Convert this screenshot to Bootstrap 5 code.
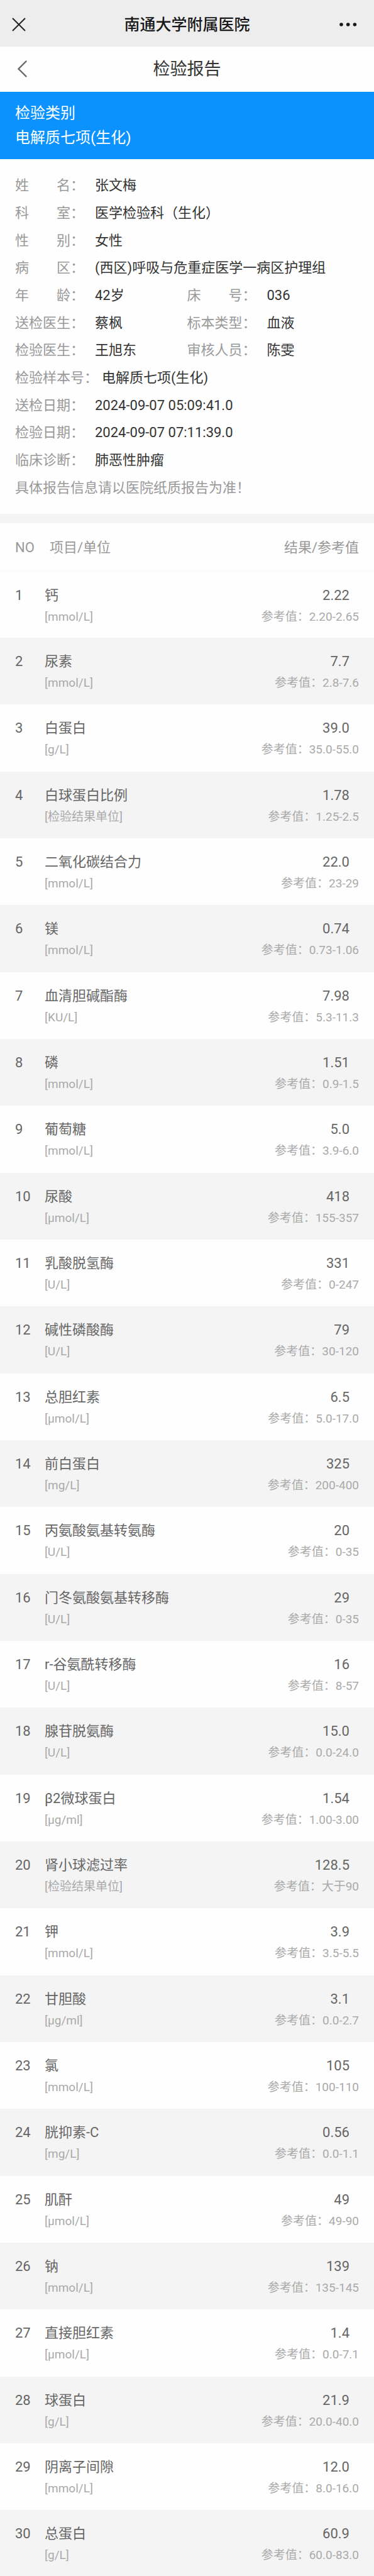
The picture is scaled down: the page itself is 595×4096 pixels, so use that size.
<!DOCTYPE html>
<html lang="zh-CN">
<head>
<meta charset="utf-8">
<meta name="viewport" content="width=device-width, initial-scale=1">
<title>检验报告</title>
<link href="https://cdn.jsdelivr.net/npm/bootstrap@5.3.0/dist/css/bootstrap.min.css" rel="stylesheet">
<style>
  body { font-family: Roboto, "Noto Sans CJK SC", sans-serif; font-size: 22px; color: #333; background: #fefefe; }
  .app-bar { height: 74px; padding: 6px 16px 0; background: #ededed; color: #181818; }
  .app-bar h1 { font-size: 25px; font-weight: 500; line-height: 36px; }
  .page-bar { height: 72px; padding: 0 20px; }
  .page-bar h2 { font-size: 27px; font-weight: 400; line-height: 36px; }
  .bar-btn { width: 40px; height: 28px; flex: none; }
  .bar-btn svg { display: block; }
  .category { padding: 15px 24px 14px; background: #0b92ff; font-size: 24px; line-height: 39px; }
  .info { padding: 20px 24px; }
  .info-row { line-height: 44px; }
  .info-row:nth-child(3n) { line-height: 43px; }
  .info dt, .info-note { font-weight: 400; color: #999; }
  .info dt { min-width: 121px; margin-right: 6px; white-space: nowrap; }
  .divider { height: 15px; background: #f4f4f4; }
  .results th { height: 76px; padding: 2px 0 0; font-weight: 400; color: #999; border-bottom: 1px solid #f8f8f8; vertical-align: middle; }
  .results td { height: 106px; padding: 21px 0 0; line-height: 34px; color: #666; vertical-align: top; }
  .results tr:nth-child(3n) td { height: 107px; }
  .results tr:last-child td { height: 105px; }
  .results tbody tr:nth-child(even) { background: #f4f4f4; }
  .results .col-no { width: 71px; padding-left: 24px; }
  .results .col-res { padding-right: 24px; text-align: right; }
  .results th.col-item { padding-left: 8px; }
  .results td span { display: block; font-size: 19px; color: #aaa; }
  .results td b { display: block; font-weight: 400; padding-right: 15px; }
</style>
</head>
<body>
<header class="app-bar d-flex align-items-center justify-content-between">
  <button type="button" class="bar-btn btn p-0 border-0" aria-label="关闭">
    <svg width="40" height="28" viewBox="0 0 40 28" fill="none" stroke="#222" stroke-width="2"><path d="M4 3 24 23M24 3 4 23"/></svg>
  </button>
  <h1 class="m-0">南通大学附属医院</h1>
  <button type="button" class="bar-btn btn p-0 border-0" aria-label="更多">
    <svg width="40" height="28" viewBox="0 0 40 28" fill="#181818"><circle cx="4" cy="13" r="2.8"/><circle cx="14.700" cy="13" r="2.8"/><circle cx="25.400" cy="13" r="2.8"/></svg>
  </button>
</header>
<nav class="page-bar d-flex align-items-center justify-content-between">
  <button type="button" class="bar-btn btn p-0 border-0" aria-label="返回">
    <svg width="40" height="28" viewBox="0 0 40 28" fill="none" stroke="#666" stroke-width="2.4" stroke-linecap="round"><path d="M21.500 1.500 9.500 13.500 21.500 25.500"/></svg>
  </button>
  <h2 class="m-0">检验报告</h2>
  <span class="bar-btn"></span>
</nav>
<section class="category text-white">
  <div>检验类别</div>
  <div>电解质七项(生化)</div>
</section>
<section class="info">
  <dl class="m-0">
    <div class="info-row d-flex"><dt>姓　　名：</dt><dd class="m-0">张文梅</dd></div>
    <div class="info-row d-flex"><dt>科　　室：</dt><dd class="m-0">医学检验科（生化）</dd></div>
    <div class="info-row d-flex"><dt>性　　别：</dt><dd class="m-0">女性</dd></div>
    <div class="info-row d-flex"><dt>病　　区：</dt><dd class="m-0">(西区)呼吸与危重症医学一病区护理组</dd></div>
    <div class="info-row row g-0">
      <div class="col-6 d-flex"><dt>年　　龄：</dt><dd class="m-0">42岁</dd></div>
      <div class="col-6 d-flex"><dt>床　　号：</dt><dd class="m-0">036</dd></div>
    </div>
    <div class="info-row row g-0">
      <div class="col-6 d-flex"><dt>送检医生：</dt><dd class="m-0">蔡枫</dd></div>
      <div class="col-6 d-flex"><dt>标本类型：</dt><dd class="m-0">血液</dd></div>
    </div>
    <div class="info-row row g-0">
      <div class="col-6 d-flex"><dt>检验医生：</dt><dd class="m-0">王旭东</dd></div>
      <div class="col-6 d-flex"><dt>审核人员：</dt><dd class="m-0">陈雯</dd></div>
    </div>
    <div class="info-row d-flex"><dt>检验样本号：</dt><dd class="m-0">电解质七项(生化)</dd></div>
    <div class="info-row d-flex"><dt>送检日期：</dt><dd class="m-0">2024-09-07 05:09:41.0</dd></div>
    <div class="info-row d-flex"><dt>检验日期：</dt><dd class="m-0">2024-09-07 07:11:39.0</dd></div>
    <div class="info-row d-flex"><dt>临床诊断：</dt><dd class="m-0">肺恶性肿瘤</dd></div>
    <div class="info-row info-note">具体报告信息请以医院纸质报告为准！</div>
  </dl>
</section>
<div class="divider"></div>
<table class="results w-100">
  <thead><tr><th class="col-no">NO</th><th class="col-item">项目/单位</th><th class="col-res">结果/参考值</th></tr></thead>
  <tbody>
    <tr><td class="col-no">1</td><td>钙<span>[mmol/L]</span></td><td class="col-res"><b>2.22</b><span>参考值：2.20-2.65</span></td></tr>
    <tr><td class="col-no">2</td><td>尿素<span>[mmol/L]</span></td><td class="col-res"><b>7.7</b><span>参考值：2.8-7.6</span></td></tr>
    <tr><td class="col-no">3</td><td>白蛋白<span>[g/L]</span></td><td class="col-res"><b>39.0</b><span>参考值：35.0-55.0</span></td></tr>
    <tr><td class="col-no">4</td><td>白球蛋白比例<span>[检验结果单位]</span></td><td class="col-res"><b>1.78</b><span>参考值：1.25-2.5</span></td></tr>
    <tr><td class="col-no">5</td><td>二氧化碳结合力<span>[mmol/L]</span></td><td class="col-res"><b>22.0</b><span>参考值：23-29</span></td></tr>
    <tr><td class="col-no">6</td><td>镁<span>[mmol/L]</span></td><td class="col-res"><b>0.74</b><span>参考值：0.73-1.06</span></td></tr>
    <tr><td class="col-no">7</td><td>血清胆碱酯酶<span>[KU/L]</span></td><td class="col-res"><b>7.98</b><span>参考值：5.3-11.3</span></td></tr>
    <tr><td class="col-no">8</td><td>磷<span>[mmol/L]</span></td><td class="col-res"><b>1.51</b><span>参考值：0.9-1.5</span></td></tr>
    <tr><td class="col-no">9</td><td>葡萄糖<span>[mmol/L]</span></td><td class="col-res"><b>5.0</b><span>参考值：3.9-6.0</span></td></tr>
    <tr><td class="col-no">10</td><td>尿酸<span>[µmol/L]</span></td><td class="col-res"><b>418</b><span>参考值：155-357</span></td></tr>
    <tr><td class="col-no">11</td><td>乳酸脱氢酶<span>[U/L]</span></td><td class="col-res"><b>331</b><span>参考值：0-247</span></td></tr>
    <tr><td class="col-no">12</td><td>碱性磷酸酶<span>[U/L]</span></td><td class="col-res"><b>79</b><span>参考值：30-120</span></td></tr>
    <tr><td class="col-no">13</td><td>总胆红素<span>[µmol/L]</span></td><td class="col-res"><b>6.5</b><span>参考值：5.0-17.0</span></td></tr>
    <tr><td class="col-no">14</td><td>前白蛋白<span>[mg/L]</span></td><td class="col-res"><b>325</b><span>参考值：200-400</span></td></tr>
    <tr><td class="col-no">15</td><td>丙氨酸氨基转氨酶<span>[U/L]</span></td><td class="col-res"><b>20</b><span>参考值：0-35</span></td></tr>
    <tr><td class="col-no">16</td><td>门冬氨酸氨基转移酶<span>[U/L]</span></td><td class="col-res"><b>29</b><span>参考值：0-35</span></td></tr>
    <tr><td class="col-no">17</td><td>r-谷氨酰转移酶<span>[U/L]</span></td><td class="col-res"><b>16</b><span>参考值：8-57</span></td></tr>
    <tr><td class="col-no">18</td><td>腺苷脱氨酶<span>[U/L]</span></td><td class="col-res"><b>15.0</b><span>参考值：0.0-24.0</span></td></tr>
    <tr><td class="col-no">19</td><td>β2微球蛋白<span>[µg/ml]</span></td><td class="col-res"><b>1.54</b><span>参考值：1.00-3.00</span></td></tr>
    <tr><td class="col-no">20</td><td>肾小球滤过率<span>[检验结果单位]</span></td><td class="col-res"><b>128.5</b><span>参考值：大于90</span></td></tr>
    <tr><td class="col-no">21</td><td>钾<span>[mmol/L]</span></td><td class="col-res"><b>3.9</b><span>参考值：3.5-5.5</span></td></tr>
    <tr><td class="col-no">22</td><td>甘胆酸<span>[µg/ml]</span></td><td class="col-res"><b>3.1</b><span>参考值：0.0-2.7</span></td></tr>
    <tr><td class="col-no">23</td><td>氯<span>[mmol/L]</span></td><td class="col-res"><b>105</b><span>参考值：100-110</span></td></tr>
    <tr><td class="col-no">24</td><td>胱抑素-C<span>[mg/L]</span></td><td class="col-res"><b>0.56</b><span>参考值：0.0-1.1</span></td></tr>
    <tr><td class="col-no">25</td><td>肌酐<span>[µmol/L]</span></td><td class="col-res"><b>49</b><span>参考值：49-90</span></td></tr>
    <tr><td class="col-no">26</td><td>钠<span>[mmol/L]</span></td><td class="col-res"><b>139</b><span>参考值：135-145</span></td></tr>
    <tr><td class="col-no">27</td><td>直接胆红素<span>[µmol/L]</span></td><td class="col-res"><b>1.4</b><span>参考值：0.0-7.1</span></td></tr>
    <tr><td class="col-no">28</td><td>球蛋白<span>[g/L]</span></td><td class="col-res"><b>21.9</b><span>参考值：20.0-40.0</span></td></tr>
    <tr><td class="col-no">29</td><td>阴离子间隙<span>[mmol/L]</span></td><td class="col-res"><b>12.0</b><span>参考值：8.0-16.0</span></td></tr>
    <tr><td class="col-no">30</td><td>总蛋白<span>[g/L]</span></td><td class="col-res"><b>60.9</b><span>参考值：60.0-83.0</span></td></tr>
  </tbody>
</table>
<script src="https://cdn.jsdelivr.net/npm/bootstrap@5.3.0/dist/js/bootstrap.bundle.min.js"></script>
</body>
</html>
